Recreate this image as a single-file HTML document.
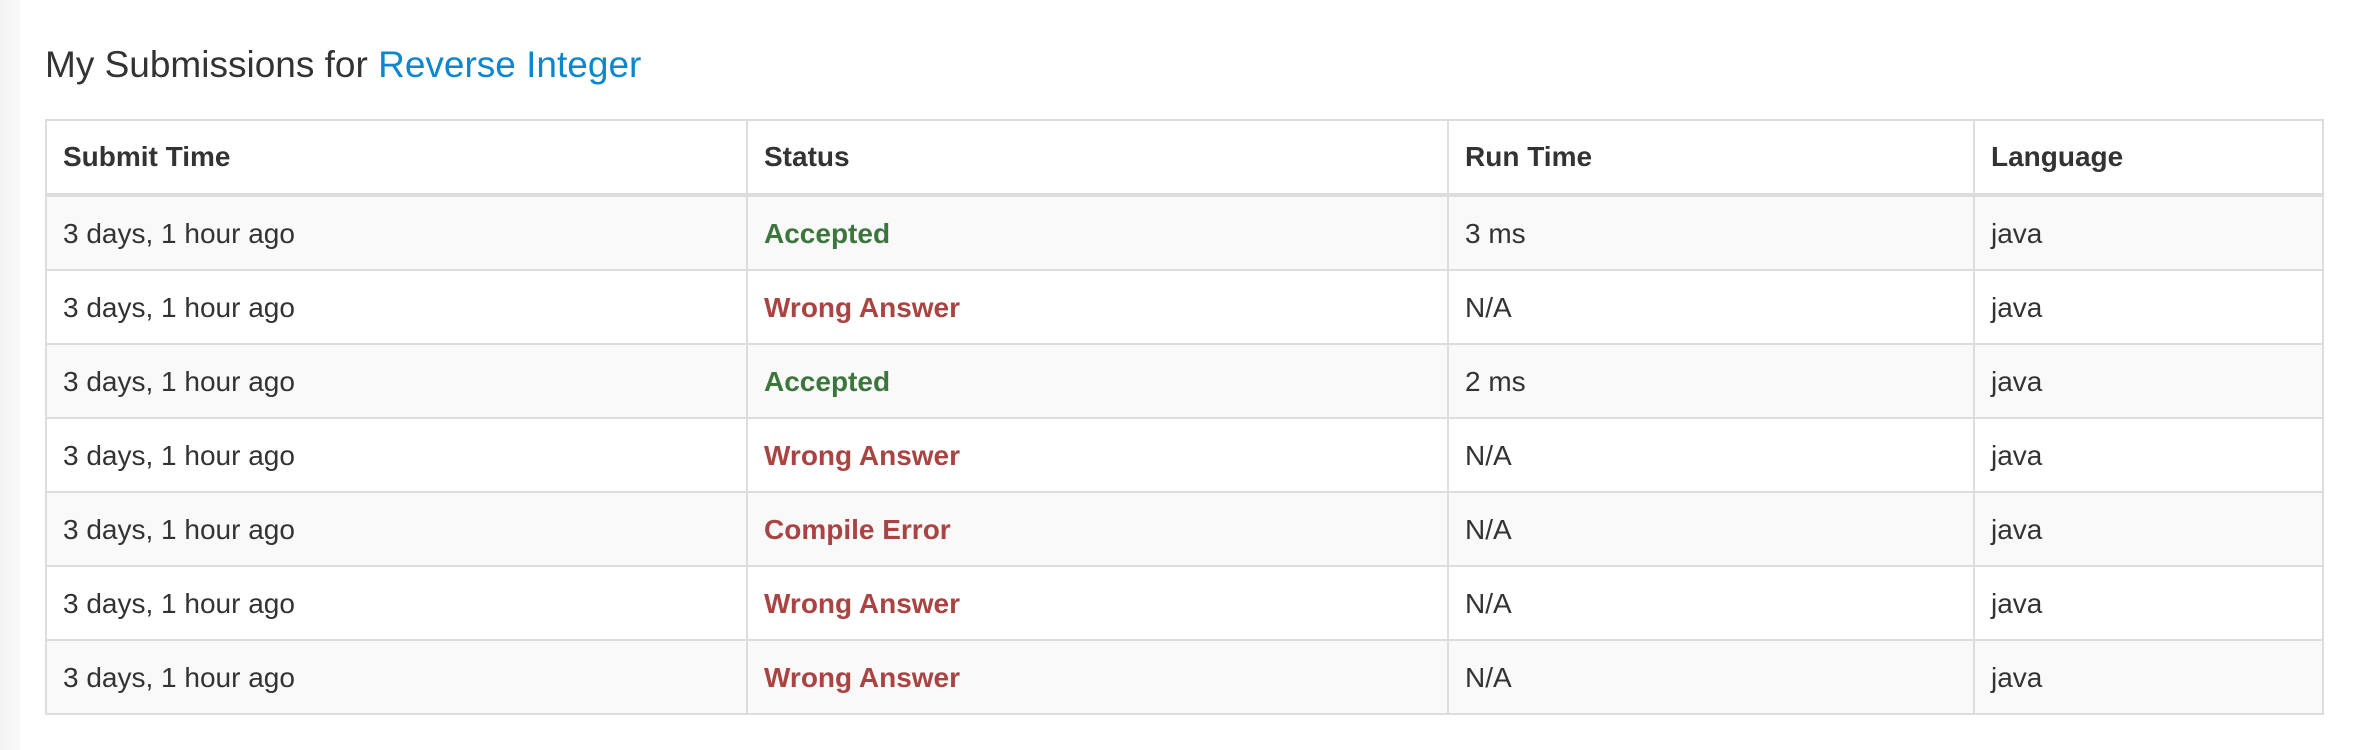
<!DOCTYPE html>
<html><head><meta charset="utf-8"><style>
html,body{margin:0;padding:0;background:#fff;width:2358px;height:750px;overflow:hidden;font-family:"Liberation Sans",Arial,sans-serif;color:#333;}
.side{position:absolute;left:0;top:0;width:20px;height:750px;background:linear-gradient(to right,#f2f2f2,#fafafa);}
h3{position:absolute;left:45px;top:40px;margin:0;font-size:37px;font-weight:normal;line-height:50px;color:#333;}
h3 span{color:#0a87ce;}
table{position:absolute;left:45px;top:119px;width:2279px;border-collapse:collapse;font-size:28px;}
td,th{border:2px solid #ddd;padding:22px 16px 20px;text-align:left;line-height:30px;height:auto;}
th{font-weight:bold;border-bottom:4px solid #ddd;padding:21px 16px 21px;}
tr.s td{background:#f9f9f9;}
.g{color:#3c763d;font-weight:bold;}
.r{color:#a94442;font-weight:bold;}
</style></head><body>
<div class="side"></div>
<h3>My Submissions for <span>Reverse Integer</span></h3>
<table>
<colgroup><col style="width:701px"><col style="width:701px"><col style="width:526px"><col></colgroup>
<tr><th>Submit Time</th><th>Status</th><th>Run Time</th><th>Language</th></tr>
<tr class="s"><td>3 days, 1 hour ago</td><td class="g">Accepted</td><td>3 ms</td><td>java</td></tr>
<tr><td>3 days, 1 hour ago</td><td class="r">Wrong Answer</td><td>N/A</td><td>java</td></tr>
<tr class="s"><td>3 days, 1 hour ago</td><td class="g">Accepted</td><td>2 ms</td><td>java</td></tr>
<tr><td>3 days, 1 hour ago</td><td class="r">Wrong Answer</td><td>N/A</td><td>java</td></tr>
<tr class="s"><td>3 days, 1 hour ago</td><td class="r">Compile Error</td><td>N/A</td><td>java</td></tr>
<tr><td>3 days, 1 hour ago</td><td class="r">Wrong Answer</td><td>N/A</td><td>java</td></tr>
<tr class="s"><td>3 days, 1 hour ago</td><td class="r">Wrong Answer</td><td>N/A</td><td>java</td></tr>
</table>
</body></html>
